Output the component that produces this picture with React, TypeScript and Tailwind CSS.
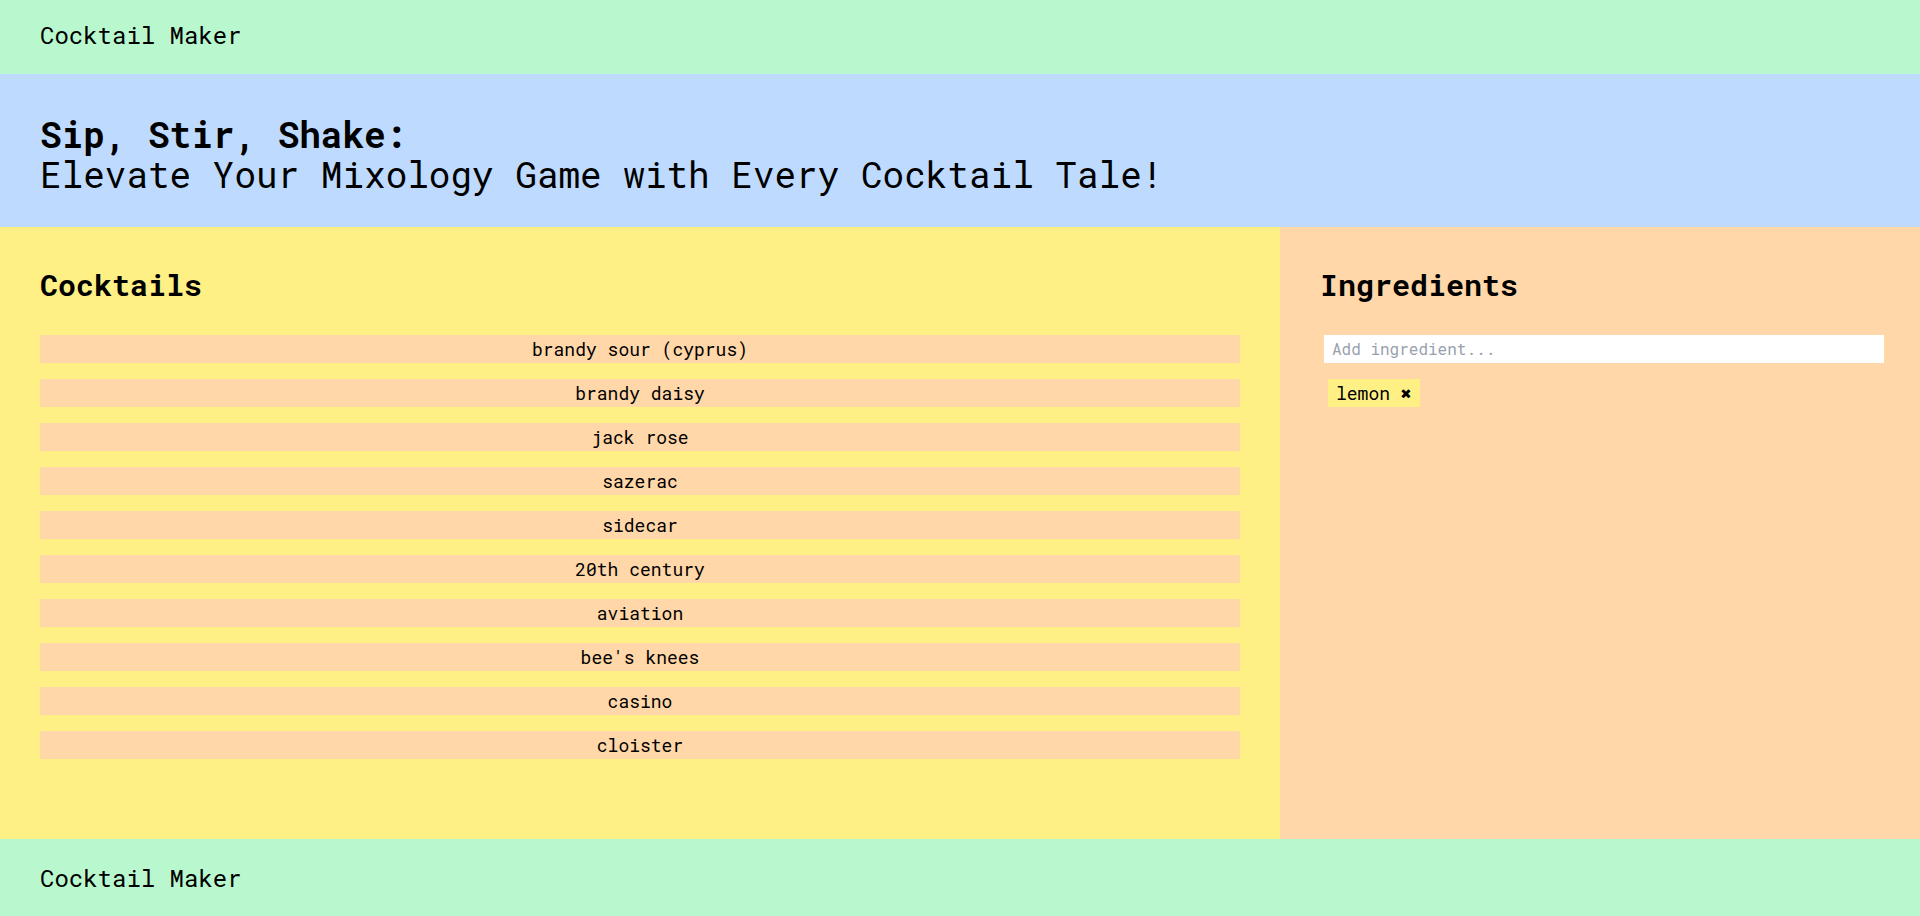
import React from "react";

const cocktails = [
  "brandy sour (cyprus)",
  "brandy daisy",
  "jack rose",
  "sazerac",
  "sidecar",
  "20th century",
  "aviation",
  "bee's knees",
  "casino",
  "cloister",
];

export default function App() {
  return (
    <div className="min-h-screen flex flex-col text-black font-['Roboto_Mono','DejaVu_Sans_Mono','Liberation_Mono',monospace]">
      <header className="h-[74px] shrink-0 bg-green-200 px-10 pt-[19px]">
        <span className="block text-2xl leading-8">Cocktail Maker</span>
      </header>
      <section className="shrink-0 bg-blue-200 px-10 pt-10 pb-[33px]">
        <h1 className="text-4xl leading-10">
          <span className="block font-bold">Sip, Stir, Shake:</span>
          <span className="block">Elevate Your Mixology Game with Every Cocktail Tale!</span>
        </h1>
      </section>
      <main className="flex-1 grid grid-cols-3">
        <div className="col-span-2 bg-yellow-200 p-10">
          <h2 className="text-3xl leading-9 font-bold mb-8">Cocktails</h2>
          <ul className="flex flex-col gap-4">
            {cocktails.map((c) => (
              <li key={c} className="bg-orange-200 text-lg leading-7 text-center">
                {c}
              </li>
            ))}
          </ul>
        </div>
        <div className="bg-orange-200 p-10">
          <h2 className="text-3xl leading-9 font-bold mb-8">Ingredients</h2>
          <input
            type="text"
            placeholder="Add ingredient..."
            className="block ml-1 w-full h-7 bg-white px-2 pb-[2px] text-base leading-6 outline-none placeholder:text-gray-400"
          />
          <div className="mt-4 flex flex-wrap gap-2 pl-2">
            <span className="bg-yellow-200 px-2 text-lg leading-7">
              lemon <span className="text-lg">✖</span>
            </span>
          </div>
        </div>
      </main>
      <footer className="h-[77px] shrink-0 bg-green-200 px-10 flex items-center">
        <span className="text-2xl leading-8">Cocktail Maker</span>
      </footer>
    </div>
  );
}
